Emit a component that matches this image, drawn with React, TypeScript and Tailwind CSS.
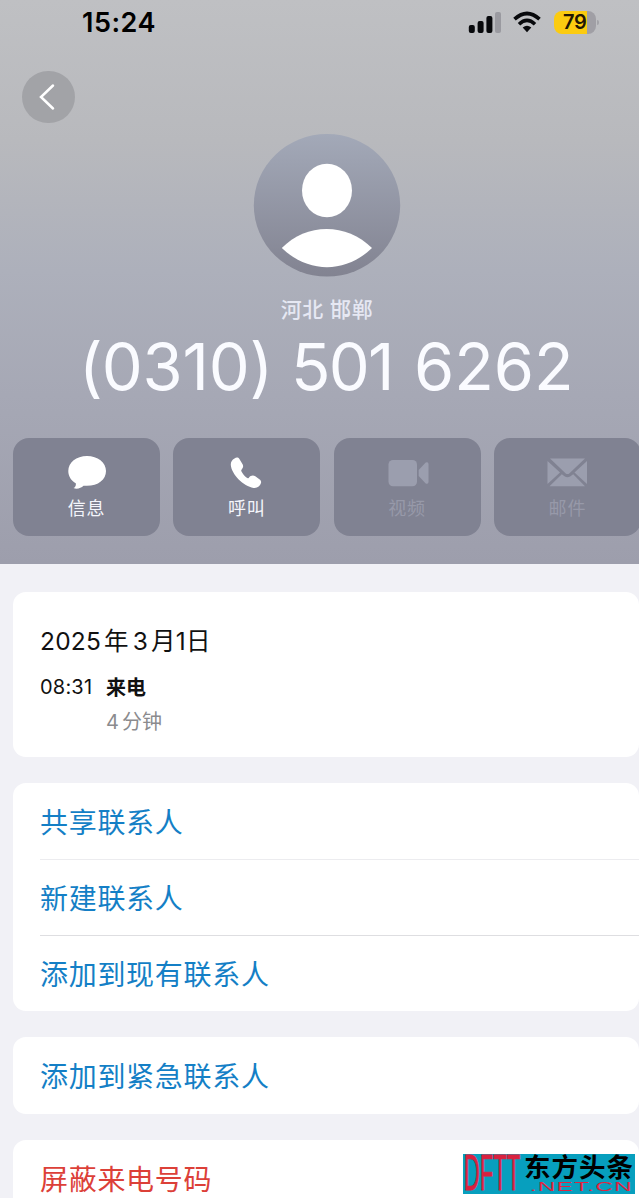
import type { ReactNode } from 'react';

const cjk = "font-['Inter','Noto_Sans_CJK_SC',sans-serif]";

function StatusBar() {
  return (
    <div className="flex h-[44px] items-center justify-between pr-[40px] pl-[82px]">
      <span className="text-[27px] leading-none font-semibold tracking-[0.5px] text-black">15:24</span>
      <div className="flex items-center">
        <svg width="34" height="24" viewBox="0 0 34 24">
          <rect x="1.8" y="15" width="6" height="8" rx="2" fill="#08090c" />
          <rect x="10.6" y="11" width="6" height="12" rx="2" fill="#08090c" />
          <rect x="19.4" y="6" width="6" height="17" rx="2" fill="#08090c" />
          <rect x="28" y="2" width="6" height="21" rx="2" fill="#9a9aa0" />
        </svg>
        <svg className="ml-[12px]" width="28" height="22" viewBox="0 0 28 22">
          <path d="M1.5 8.2Q14 -3.2 26.5 8.2" fill="none" stroke="#08090c" strokeWidth="3.7" />
          <path d="M6 13.2Q14 5.4 22 13.2" fill="none" stroke="#08090c" strokeWidth="3.5" />
          <path d="M9.7 16.5Q14 12.8 18.3 16.5L14 21.3Z" fill="#08090c" />
        </svg>
        <div className="ml-[13px] flex h-[23px] w-[42px] overflow-hidden rounded-[8px] bg-[linear-gradient(90deg,#fbcb10_33px,#a09fa5_33px)] pl-[9px]">
          <span className="text-[20px] leading-[23px] font-semibold tracking-[-0.3px] text-[#211704]">79</span>
        </div>
        <div className="ml-[1px] h-[5px] w-[2px] rounded-r-full bg-[#a3a3a8]" />
      </div>
    </div>
  );
}

function Avatar() {
  return (
    <svg width="148" height="144" viewBox="0 0 148 144">
      <defs>
        <linearGradient id="disc" x1="0" y1="0" x2="0" y2="1">
          <stop offset="0" stopColor="#a3a9b8" />
          <stop offset="1" stopColor="#828391" />
        </linearGradient>
      </defs>
      <ellipse cx="74" cy="71.3" rx="73.2" ry="71.3" fill="url(#disc)" />
      <ellipse cx="74" cy="56.5" rx="25" ry="26.8" fill="#fff" />
      <path d="M28.8 114C53 88.5 94 88.5 119 114C93 139.5 55 139.5 28.8 114Z" fill="#fff" />
    </svg>
  );
}

function Action({ label, dim, children }: { label: string; dim?: boolean; children: ReactNode }) {
  return (
    <div className={`flex h-[98px] w-[147px] shrink-0 flex-col items-center rounded-[16px] bg-[#808292] pt-[14px] ${dim ? 'text-[#9b9eae]' : 'text-white'}`}>
      <svg width="48" height="40" viewBox="0 0 48 40" fill="currentColor">{children}</svg>
      <span className={`mt-[7px] text-[18px] leading-[20px] tracking-[0.8px] ${dim ? 'text-[#9799a9]' : 'text-[#f4f5fb]'}`}>{label}</span>
    </div>
  );
}

function Row({ children, red }: { children: string; red?: boolean }) {
  return (
    <div className={`flex h-[76px] items-center pt-[4px] text-[28px] leading-none tracking-[0.7px] ${red ? 'text-[#dc4038]' : 'text-[#147fc6]'}`}>
      {children}
    </div>
  );
}

export default function App() {
  return (
    <div className={`h-[1199px] w-[640px] overflow-hidden bg-white ${cjk}`}>
      <div className="relative h-[1198px] w-[639px] overflow-hidden bg-[#f1f1f6]">
        <header className="h-[564px] bg-[linear-gradient(180deg,#bfc0c3_0%,#b8b9bd_25%,#adb0bb_48%,#a6a8b5_70%,#9d9eac_100%)]">
          <StatusBar />
          <div className="flex h-[90px] items-start pt-[27px] pl-[22px]">
            <button className="flex h-[52px] w-[53px] items-center justify-center rounded-full bg-[#a2a3a7] pr-[3px]" aria-label="返回">
              <svg width="18" height="28" viewBox="0 0 18 28">
                <path d="M15 2.5L3 14L15 25.5" fill="none" stroke="#fff" strokeWidth="2.5" strokeLinecap="round" />
              </svg>
            </button>
          </div>
          <div className="flex flex-col items-center pl-[15px]">
            <Avatar />
            <div className="mt-[19px] text-[21px] leading-[26px] font-medium tracking-[0.6px] text-[#e6e8f3]">河北 邯郸</div>
          </div>
          <div className="mt-[6px] flex h-[76px] pl-[79px] text-[65px] leading-[76px] whitespace-nowrap text-[#fafbff] [font-feature-settings:'calt'_0]">
            <span className="w-[212px]">(<span className="-ml-[1px] tracking-[-0.2px]">0310</span>)</span>
            <span className="w-[123px] tracking-[-1.8px]">501</span>
            <span className="tracking-[-0.1px]">6262</span>
          </div>
          <div className="mt-[33px] flex gap-[13.3px] pl-[13px]">
            <Action label="信息">
              <path d="M24 4C13.3 4 5.3 10.5 5.3 19C5.3 24.5 8.3 28.7 12.8 31.2C13.3 33.7 12 35.4 10.5 36C14 37.7 18 36 20.5 33.7C34 35 43 28.2 43 19C43 10.5 34.7 4 24 4Z" />
            </Action>
            <Action label="呼叫">
              <path d="M11.5 6.4C9.1 7.8 7.6 9.8 7.8 13C8.6 22.5 20.5 34.3 30.5 35.9C34.3 36.5 37 34 38 31C38.4 29.6 37.9 28.3 36.7 27.4L32.3 24.3C30 22.8 27.5 23.6 25.7 25.9C24.9 26.4 24.4 26.2 23.8 25.7C21.6 24 19.8 21.8 18.5 19.4C18.1 18.7 18.1 18.1 18.7 17.4C20.4 15.6 20.4 13.8 19.6 12.3L16.4 7C15.2 5.2 13.3 5.3 11.5 6.4Z" />
            </Action>
            <Action label="视频" dim>
              <rect x="5.5" y="8" width="28.5" height="26.3" rx="4.5" />
              <path d="M35.7 18L42.7 10.5Q45.5 9.5 45.5 12V30Q45.5 32.5 42.7 31.5L35.7 24Z" />
            </Action>
            <Action label="邮件" dim>
              <path d="M7 6.5H42L26.5 21.2Q24.5 23 22.5 21.2Z" />
              <path d="M4.5 9L17 20.5L4.5 32Z" />
              <path d="M44 9L31.5 20.5L44 32Z" />
              <path d="M6.5 34.2L18.8 22.3L21.5 24.3Q24.5 26.3 27.5 24.3L30.2 22.3L42 34.2Z" />
            </Action>
          </div>
        </header>

        <main className="pt-[28px] pl-[13px]">
          <section className="h-[165px] rounded-[13px] bg-white pt-[34px] pl-[27px]">
            <div className="flex h-[30px] items-center text-[24.5px] leading-none tracking-[0.2px] text-[#111]">
              <span>2025</span><span className="ml-[3px]">年</span><span className="ml-[4px]">3</span><span className="ml-[3px]">月</span>1<span>日</span>
            </div>
            <div className="mt-[19px] flex h-[26px] items-center text-[20px] leading-none text-[#111]">
              <span className="w-[66px] pb-[2px] tracking-[0.2px]">08:31</span>
              <span className="font-bold">来电</span>
            </div>
            <div className="mt-[8px] ml-[66px] flex h-[26px] items-center text-[20px] leading-none text-[#8b8b8e]">
              4<span className="ml-[3px]">分钟</span>
            </div>
          </section>
          <section className="mt-[26px] rounded-[13px] bg-white pl-[27px]">
            <Row>共享联系人</Row>
            <div className="h-px bg-[#ececef]" />
            <div className="-mt-px"><Row>新建联系人</Row></div>
            <div className="h-px bg-[#dedee1]" />
            <div className="-mt-px"><Row>添加到现有联系人</Row></div>
          </section>
          <section className="mt-[26px] h-[77px] rounded-[13px] bg-white pl-[27px]">
            <Row>添加到紧急联系人</Row>
          </section>
          <section className="mt-[26px] rounded-[13px] bg-white pl-[27px]">
            <Row red>屏蔽来电号码</Row>
          </section>
        </main>

        <div className="absolute top-[1154px] left-[463px] flex h-[40px] w-[172px] bg-[#079fbe]">
          <div className="h-[40px] w-[61px] shrink-0">
            <div className="w-[68px] origin-top-left scale-x-[0.85] scale-y-[1.92] pl-px font-['Liberation_Sans',sans-serif] text-[26px] leading-[20px] whitespace-nowrap text-[#d9213f] [-webkit-text-stroke:0.5px_#d9213f]">DFTT</div>
          </div>
          <div className="flex flex-col">
            <div className="h-[27px] text-[26.5px] leading-[27px] font-bold tracking-[1px] whitespace-nowrap text-black">东方头条</div>
            <div className="w-[56px] origin-left scale-x-[1.95] pl-[3px] font-['Liberation_Sans',sans-serif] text-[12.5px] leading-[13px] tracking-[0.6px] whitespace-nowrap text-[#e02440]">.NET.CN</div>
          </div>
        </div>
      </div>
    </div>
  );
}
